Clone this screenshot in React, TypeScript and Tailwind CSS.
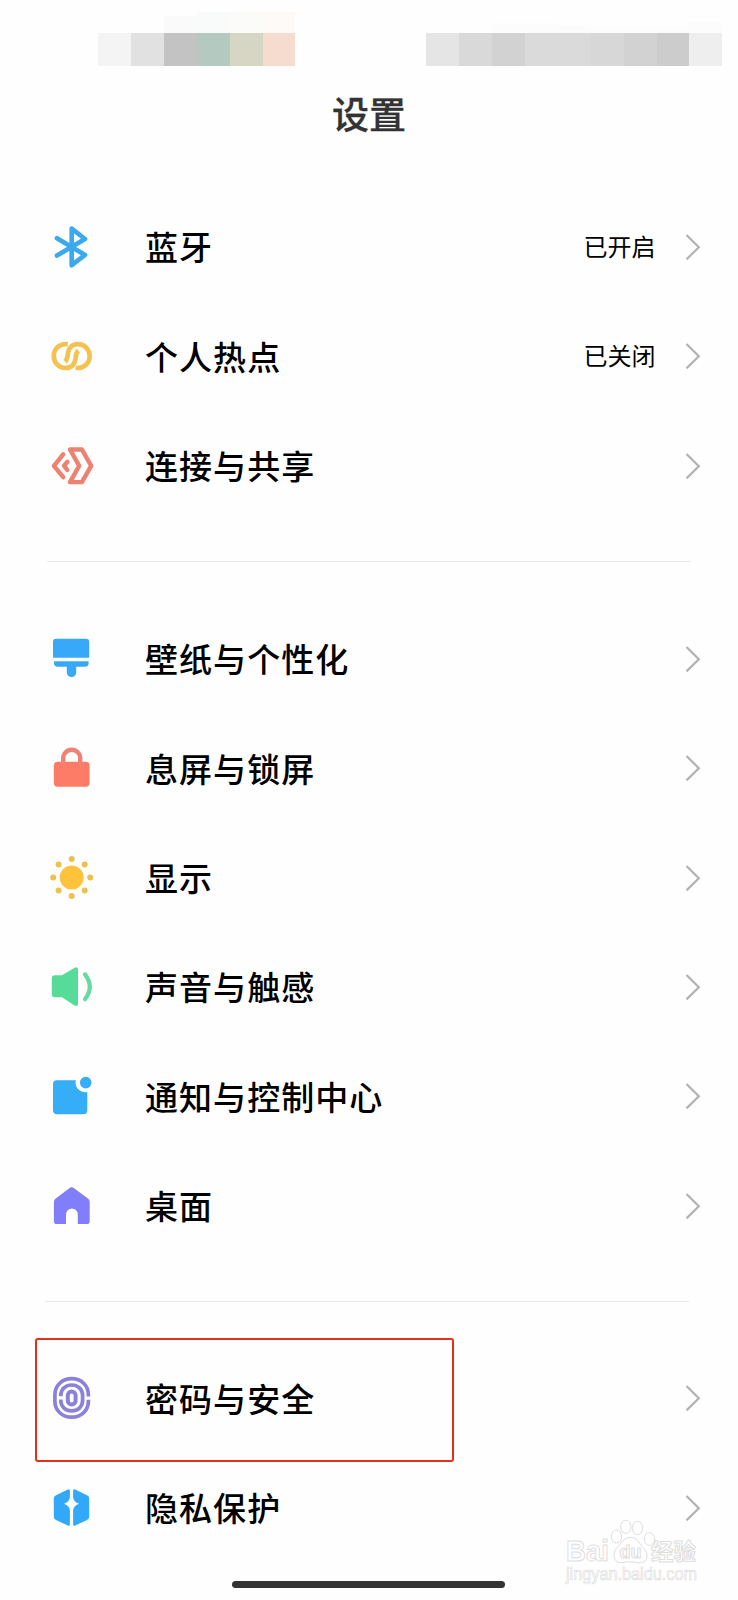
import type { ReactNode } from "react";

type Item = {
  label: string;
  value?: string;
  icon: ReactNode;
  highlighted?: boolean;
};

function Icon({ children }: { children: ReactNode }) {
  return (
    <svg viewBox="0 0 48 48" className="h-12 w-12 shrink-0" fill="none" strokeLinecap="round" strokeLinejoin="round">
      {children}
    </svg>
  );
}

const bluetooth = (
  <Icon>
    <path d="M10 15.3 38 32 24.7 42.2V5.6L38 16 10 32.5" stroke="#3ba9ee" strokeWidth="4.7" />
  </Icon>
);

const hotspot = (
  <Icon>
    <g stroke="#f4c252" strokeWidth="4.7" strokeLinecap="butt">
      <path d="M20.8 12.2C12.5 11.2 6.8 17 6.8 24S12 36 18.4 36C25.5 36 28.2 31 28.6 26C28.8 22.5 29.3 20.4 31.4 18.6" />
      <path d="M28.6 35.9C37 36.9 42.7 31 42.7 24.1S37.4 12.2 31 12.2C23.9 12.2 21.2 17.2 20.8 22.2C20.6 25.7 20.1 27.8 18 29.6" />
    </g>
  </Icon>
);

const connection = (
  <Icon>
    <g stroke="#ee8170" strokeWidth="4.4">
      <path d="M23 7.5H34.9L44.2 23.8 34.9 40.1H23L32.2 23.8Z" />
      <path d="M16.2 12.4 6.9 23.8 16.2 35.2" />
      <path d="M20.5 19.8 17 23.8 20.3 27.8" />
    </g>
  </Icon>
);

const wallpaper = (
  <Icon>
    <path d="M9 3.7H39Q42.2 3.7 42.2 6.9V22.7H6V6.9Q6 3.7 9 3.7Z" fill="#38a8f8" />
    <path d="M7 26.2H41.6V28Q41.6 31.8 38 31.8H29.2V37.4A4.7 4.7 0 0 1 19.8 37.4V31.8H10.6Q7 31.8 7 28Z" fill="#38a8f8" />
  </Icon>
);

const lock = (
  <Icon>
    <rect x="6.8" y="17.8" width="35.8" height="25" rx="3.8" fill="#fc7c68" />
    <path d="M16.2 20V14.2A8.5 8.5 0 0 1 33.2 14.2V20" stroke="#f08274" strokeWidth="4.4" strokeLinecap="butt" />
  </Icon>
);

const display = (
  <Icon>
    <circle cx="24.7" cy="23.6" r="12" fill="#fec23c" />
    <g fill="#eec050">
      <circle cx="24.7" cy="5.1" r="3" />
      <circle cx="24.7" cy="42.1" r="3" />
      <circle cx="6.2" cy="23.6" r="3" />
      <circle cx="43.2" cy="23.6" r="3" />
      <circle cx="11.6" cy="10.6" r="3" />
      <circle cx="37.7" cy="10.6" r="3" />
      <circle cx="11.6" cy="36.6" r="3" />
      <circle cx="37.7" cy="36.6" r="3" />
    </g>
  </Icon>
);

const sound = (
  <Icon>
    <path d="M7.7 12.2H15L27.6 4.7Q31 3.2 31 6.6V40.8Q31 44 27.6 42.5L15 34.2H7.7Q4.8 34.2 4.8 31.3V15.1Q4.8 12.2 7.7 12.2Z" fill="#56dc98" />
    <path d="M38 11.4Q47.6 23.8 38 36.2" stroke="#66dba0" strokeWidth="4.2" />
  </Icon>
);

const notification = (
  <Icon>
    <path d="M10 8.3H28.9A9.6 9.6 0 0 0 40.3 20V38.2Q40.3 42.2 36.3 42.2H10Q6 42.2 6 38.2V12.3Q6 8.3 10 8.3Z" fill="#36adf7" />
    <circle cx="38.7" cy="10.6" r="5.8" fill="#36adf7" />
  </Icon>
);

const home = (
  <Icon>
    <path d="M22 6.4Q24.7 4.2 27.4 6.4L40.9 16.4Q42.7 17.8 42.7 20V39.2Q42.7 42 39.9 42H30.8V32.5A5.9 5.9 0 0 0 19 32.5V42H9.7Q6.9 42 6.9 39.2V20Q6.9 17.8 8.7 16.4Z" fill="#817ef9" />
  </Icon>
);

const fingerprint = (
  <Icon>
    <g stroke="#8b80da" strokeWidth="3.7" strokeLinecap="butt">
      <path d="M41.4 22.4V21C41.4 11.4 34.2 4.7 24.7 4.7S7.9 11.4 7.9 21V27.2C7.9 36.6 15.2 43.2 24.7 43.2S41.4 36.6 41.4 27.2V25.8" />
      <path d="M13.8 22.2V21.4C13.8 15.2 18.6 11 24.7 11S35.6 15.2 35.6 21.4V26.6C35.6 32.8 30.8 36.9 24.7 36.9S13.8 32.8 13.8 26.6V25.6" />
      <rect x="20.8" y="17.6" width="7.8" height="12.8" rx="3.9" strokeWidth="4" />
    </g>
  </Icon>
);

const privacy = (
  <Icon>
    <path d="M20.8 5.5Q22.9 4.6 22.9 6.8V13.5Q21.8 18.4 16.8 19.8Q21.8 21.2 22.9 26V40.2Q22.9 42.4 20.8 41.5L9 36Q6.8 35.1 6.8 32.8V14.4Q6.8 12.2 9 11.3Z" fill="#32a9f8" />
    <path d="M28.2 5.5Q26.1 4.6 26.1 6.8V13.5Q27.2 18.4 32.2 19.8Q27.2 21.2 26.1 26V40.2Q26.1 42.4 28.2 41.5L40 36Q42.2 35.1 42.2 32.8V14.4Q42.2 12.2 40 11.3Z" fill="#32a9f8" />
  </Icon>
);

const connectivity: Item[] = [
  { label: "蓝牙", value: "已开启", icon: bluetooth },
  { label: "个人热点", value: "已关闭", icon: hotspot },
  { label: "连接与共享", icon: connection },
];

const appearance: Item[] = [
  { label: "壁纸与个性化", icon: wallpaper },
  { label: "息屏与锁屏", icon: lock },
  { label: "显示", icon: display },
  { label: "声音与触感", icon: sound },
  { label: "通知与控制中心", icon: notification },
  { label: "桌面", icon: home },
];

const security: Item[] = [
  { label: "密码与安全", icon: fingerprint, highlighted: true },
  { label: "隐私保护", icon: privacy },
];

function Row({ label, value, icon, highlighted }: Item) {
  return (
    <li className="relative flex h-[109.35px] items-center pr-[37px] pl-[47px]">
      {icon}
      <span className="ml-[50px] flex-1 text-[33px] leading-none font-medium tracking-[1.05px] whitespace-nowrap text-black">
        {label}
      </span>
      {value && <span className="mr-[29.5px] pb-0.5 text-[24px] leading-none text-black">{value}</span>}
      <svg viewBox="0 0 16 26" className="h-[26px] w-4 shrink-0" fill="none" stroke="#b2b2b2" strokeWidth="2.2">
        <path d="M1.5 1 13.8 13.2 1.5 25.4" />
      </svg>
      {highlighted && (
        <div className="absolute top-[-6px] left-[35px] h-[124.5px] w-[419px] rounded-[3px] border-2 border-[#e0301e]" />
      )}
    </li>
  );
}

function Group({ items }: { items: Item[] }) {
  return (
    <ul>
      {items.map((item) => (
        <Row key={item.label} {...item} />
      ))}
    </ul>
  );
}

function StatusBar() {
  return (
    <div className="flex h-[66px] items-end pl-[98px]">
      <div className="flex items-end">
        <i className="h-[33px] w-[33px] bg-[#f4f4f4]" />
        <i className="h-[33px] w-[33px] bg-[#e1e1e1]" />
        <i className="h-[50px] w-[33px] border-t-[17px] border-[#fafafa] bg-[#c3c3c3]" />
        <i className="h-[54px] w-[33px] border-t-[21px] border-[#f9fbfa] bg-[#b4c9bf]" />
        <i className="h-[54px] w-[33px] border-t-[21px] border-[#fbfbf9] bg-[#d5d6c3]" />
        <i className="h-[54px] w-8 border-t-[21px] border-[#fefaf8] bg-[#f6dbcf]" />
      </div>
      <div className="ml-[131px] flex items-end">
        <i className="h-[33px] w-[33px] bg-[#e5e5e5]" />
        <i className="h-[33px] w-[33px] bg-[#d9d9d9]" />
        <i className="h-[43px] w-[33px] border-t-[10px] border-[#fcfcfc] bg-[#d2d2d2]" />
        <i className="h-[43px] w-[33px] border-t-[10px] border-[#fcfcfc] bg-[#dadada]" />
        <i className="h-[40px] w-[33px] border-t-[7px] border-[#fcfcfc] bg-[#dadada]" />
        <i className="h-[37px] w-[33px] border-t-[4px] border-[#fcfcfc] bg-[#d7d7d7]" />
        <i className="h-[37px] w-[33px] border-t-[4px] border-[#fcfcfc] bg-[#d2d2d2]" />
        <i className="h-[37px] w-8 border-t-[4px] border-[#fcfcfc] bg-[#cccccc]" />
        <i className="h-[44px] w-[33px] border-t-[11px] border-[#fcfcfc] bg-[#eeeeee]" />
      </div>
    </div>
  );
}

function Watermark() {
  return (
    <div className="absolute top-[1518px] left-[562px] h-[76px] w-[144px]">
      <svg viewBox="0 0 144 76" className="h-[76px] w-[144px]" fill="#fefefe" stroke="#dedede" strokeWidth="1">
        <text x="4" y="43" fontFamily="Liberation Sans" fontWeight="bold" fontSize="29" textLength="43" lengthAdjust="spacingAndGlyphs">
          Bai
        </text>
        <ellipse cx="54.5" cy="18.5" rx="5.2" ry="6.4" />
        <ellipse cx="63.8" cy="8.8" rx="5.2" ry="6.6" />
        <ellipse cx="75.5" cy="10" rx="5.2" ry="6.6" />
        <ellipse cx="87.5" cy="21" rx="5.2" ry="6.4" />
        <path d="M59 25C64 17.5 73 17.5 77.5 25C80.5 29.5 85 32 85 38C85 44 80 45.5 75 44.5C70 43.5 66 43.5 61 44.5C56 45.5 52 42.5 52 37C52 31 56 29.5 59 25Z" />
        <text x="57.5" y="40" fontFamily="Liberation Sans" fontWeight="bold" fontSize="18" textLength="22" lengthAdjust="spacingAndGlyphs">
          du
        </text>
        <text x="89" y="42" fontFamily="Noto Sans CJK SC, sans-serif" fontWeight="bold" fontSize="22.5">
          经验
        </text>
        <text x="4" y="62" fontFamily="Liberation Sans" fontSize="17.5" strokeWidth="0.7" textLength="131" lengthAdjust="spacingAndGlyphs">
          jingyan.baidu.com
        </text>
      </svg>
    </div>
  );
}

export default function App() {
  return (
    <main className="relative flex h-[1600px] w-[738px] flex-col overflow-hidden bg-[#fefefe] font-['Noto_Sans_CJK_SC',sans-serif]">
      <StatusBar />
      <h1 className="flex h-[126.3px] justify-center pt-[29px] text-[37px] leading-[37px] font-medium text-[#333] [-webkit-text-stroke:0.3px_#333]">
        设置
      </h1>
      <Group items={connectivity} />
      <hr className="mt-[40.6px] mr-[47px] mb-[42.3px] ml-[47px] h-px border-0 bg-[#e8e8e8]" />
      <Group items={appearance} />
      <hr className="mt-[40.7px] mr-[49px] mb-[41.6px] ml-[45px] h-px border-0 bg-[#e8e8e8]" />
      <Group items={security} />
      <div className="mt-[19px] ml-[232px] h-[7px] w-[273px] rounded-full bg-[#333]" />
      <Watermark />
    </main>
  );
}
